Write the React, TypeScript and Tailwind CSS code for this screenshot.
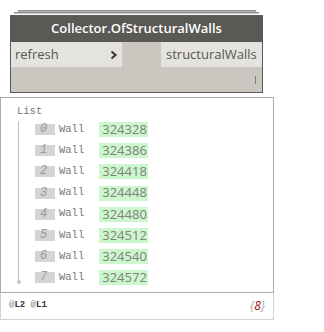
const ids = [324328, 324386, 324418, 324448, 324480, 324512, 324540, 324572];

const sans = "font-['Open_Sans','Liberation_Sans',sans-serif]";
const mono = "font-['Liberation_Mono','DejaVu_Sans_Mono',monospace]";

function ChevronRight() {
  return (
    <svg width="8" height="10" viewBox="0 0 8 10" fill="none">
      <path d="M1.5 1.5 L5.5 5 L1.5 8.5" stroke="#3a3a3a" strokeWidth="2.2" />
    </svg>
  );
}

export default function App() {
  return (
    <div className={`w-[324px] h-[332px] bg-white ${sans}`}>
      {/* node */}
      <div className="pt-[10px] pl-[10px]">
        <div className="ml-[8px] w-[238px] h-[2px] bg-[#b4b4b4] border-t border-[#8f8f8f]" />
        <div className="ml-[4px] w-[245px] h-[2px] bg-[#c8c8c8] border-t border-[#8f8f8f] mb-[1px]" />
        <div className="w-[253px] border-x border-b border-[#5a5a5a]">
          <div className="h-[27px] bg-[#5a5955] flex items-center justify-center text-white text-[13px] font-semibold">
            Collector.OfStructuralWalls
          </div>
          <div className="h-[25px] bg-[#cbc7c0] flex justify-between">
            <div className="w-[111px] bg-[#e4e3df] flex items-center justify-between pl-[4px] pr-[4px] text-[13px] text-[#555]">
              <span>refresh</span>
              <ChevronRight />
            </div>
            <div className="w-[101px] bg-[#e4e3df] flex items-center pl-[5px] text-[13px] text-[#555]">
              structuralWalls
            </div>
          </div>
          <div className="h-[25px] bg-[#cbc7c0] flex items-center justify-end pr-[6px]">
            <div className="w-[1px] h-[8px] bg-[#777]" />
          </div>
        </div>
      </div>

      {/* watch panel */}
      <div className="mt-[4px] w-[274px]">
        <div className="h-[196px] border border-[#ababab] pt-[6px]">
          <div className={`${mono} text-[10.5px] leading-[14px] text-[#777] pl-[16px]`}>List</div>
          <div className="flex ml-[16px] mt-[1px]">
            <div className="flex flex-col items-center w-[3px] pt-[2px] pb-[5px]">
              <div className="w-[1px] grow bg-[#bdbdbd]" />
              <div className="w-[4px] h-[4px] rounded-full bg-[#c4c4c4]" />
            </div>
            <div className="flex flex-col pl-[15px]">
              {ids.map((id, i) => (
                <div key={id} className="h-[21.2px] flex items-center">
                  <div className={`w-[20px] h-[11px] bg-[#d4d4d4] ${mono} italic text-[12px] leading-[10px] text-[#9a9a9a] pl-[5px] overflow-visible`}>
                    {i}
                  </div>
                  <span className={`${mono} text-[10.5px] text-[#777] ml-[4px]`}>Wall</span>
                  <div className="ml-[15px] w-[49px] h-[15px] bg-[#ccf7cc] flex items-center pl-[3px] text-[13px] text-[#808080]">
                    {id}
                  </div>
                </div>
              ))}
            </div>
          </div>
        </div>
        <div className="h-[27px] border-x border-b border-[#d2d2d2] flex items-center justify-between pl-[8px] pr-[8px]">
          <span className={`${mono} text-[9px] font-bold text-[#333]`}>
            <span className="text-[#999]">@</span>L2 <span className="text-[#999]">@</span>L1
          </span>
          <span className="text-[12px] italic">
            <span className="text-[#aaa]">{"{"}</span>
            <span className="text-[#9b1010]">8</span>
            <span className="text-[#aaa]">{"}"}</span>
          </span>
        </div>
      </div>
    </div>
  );
}
